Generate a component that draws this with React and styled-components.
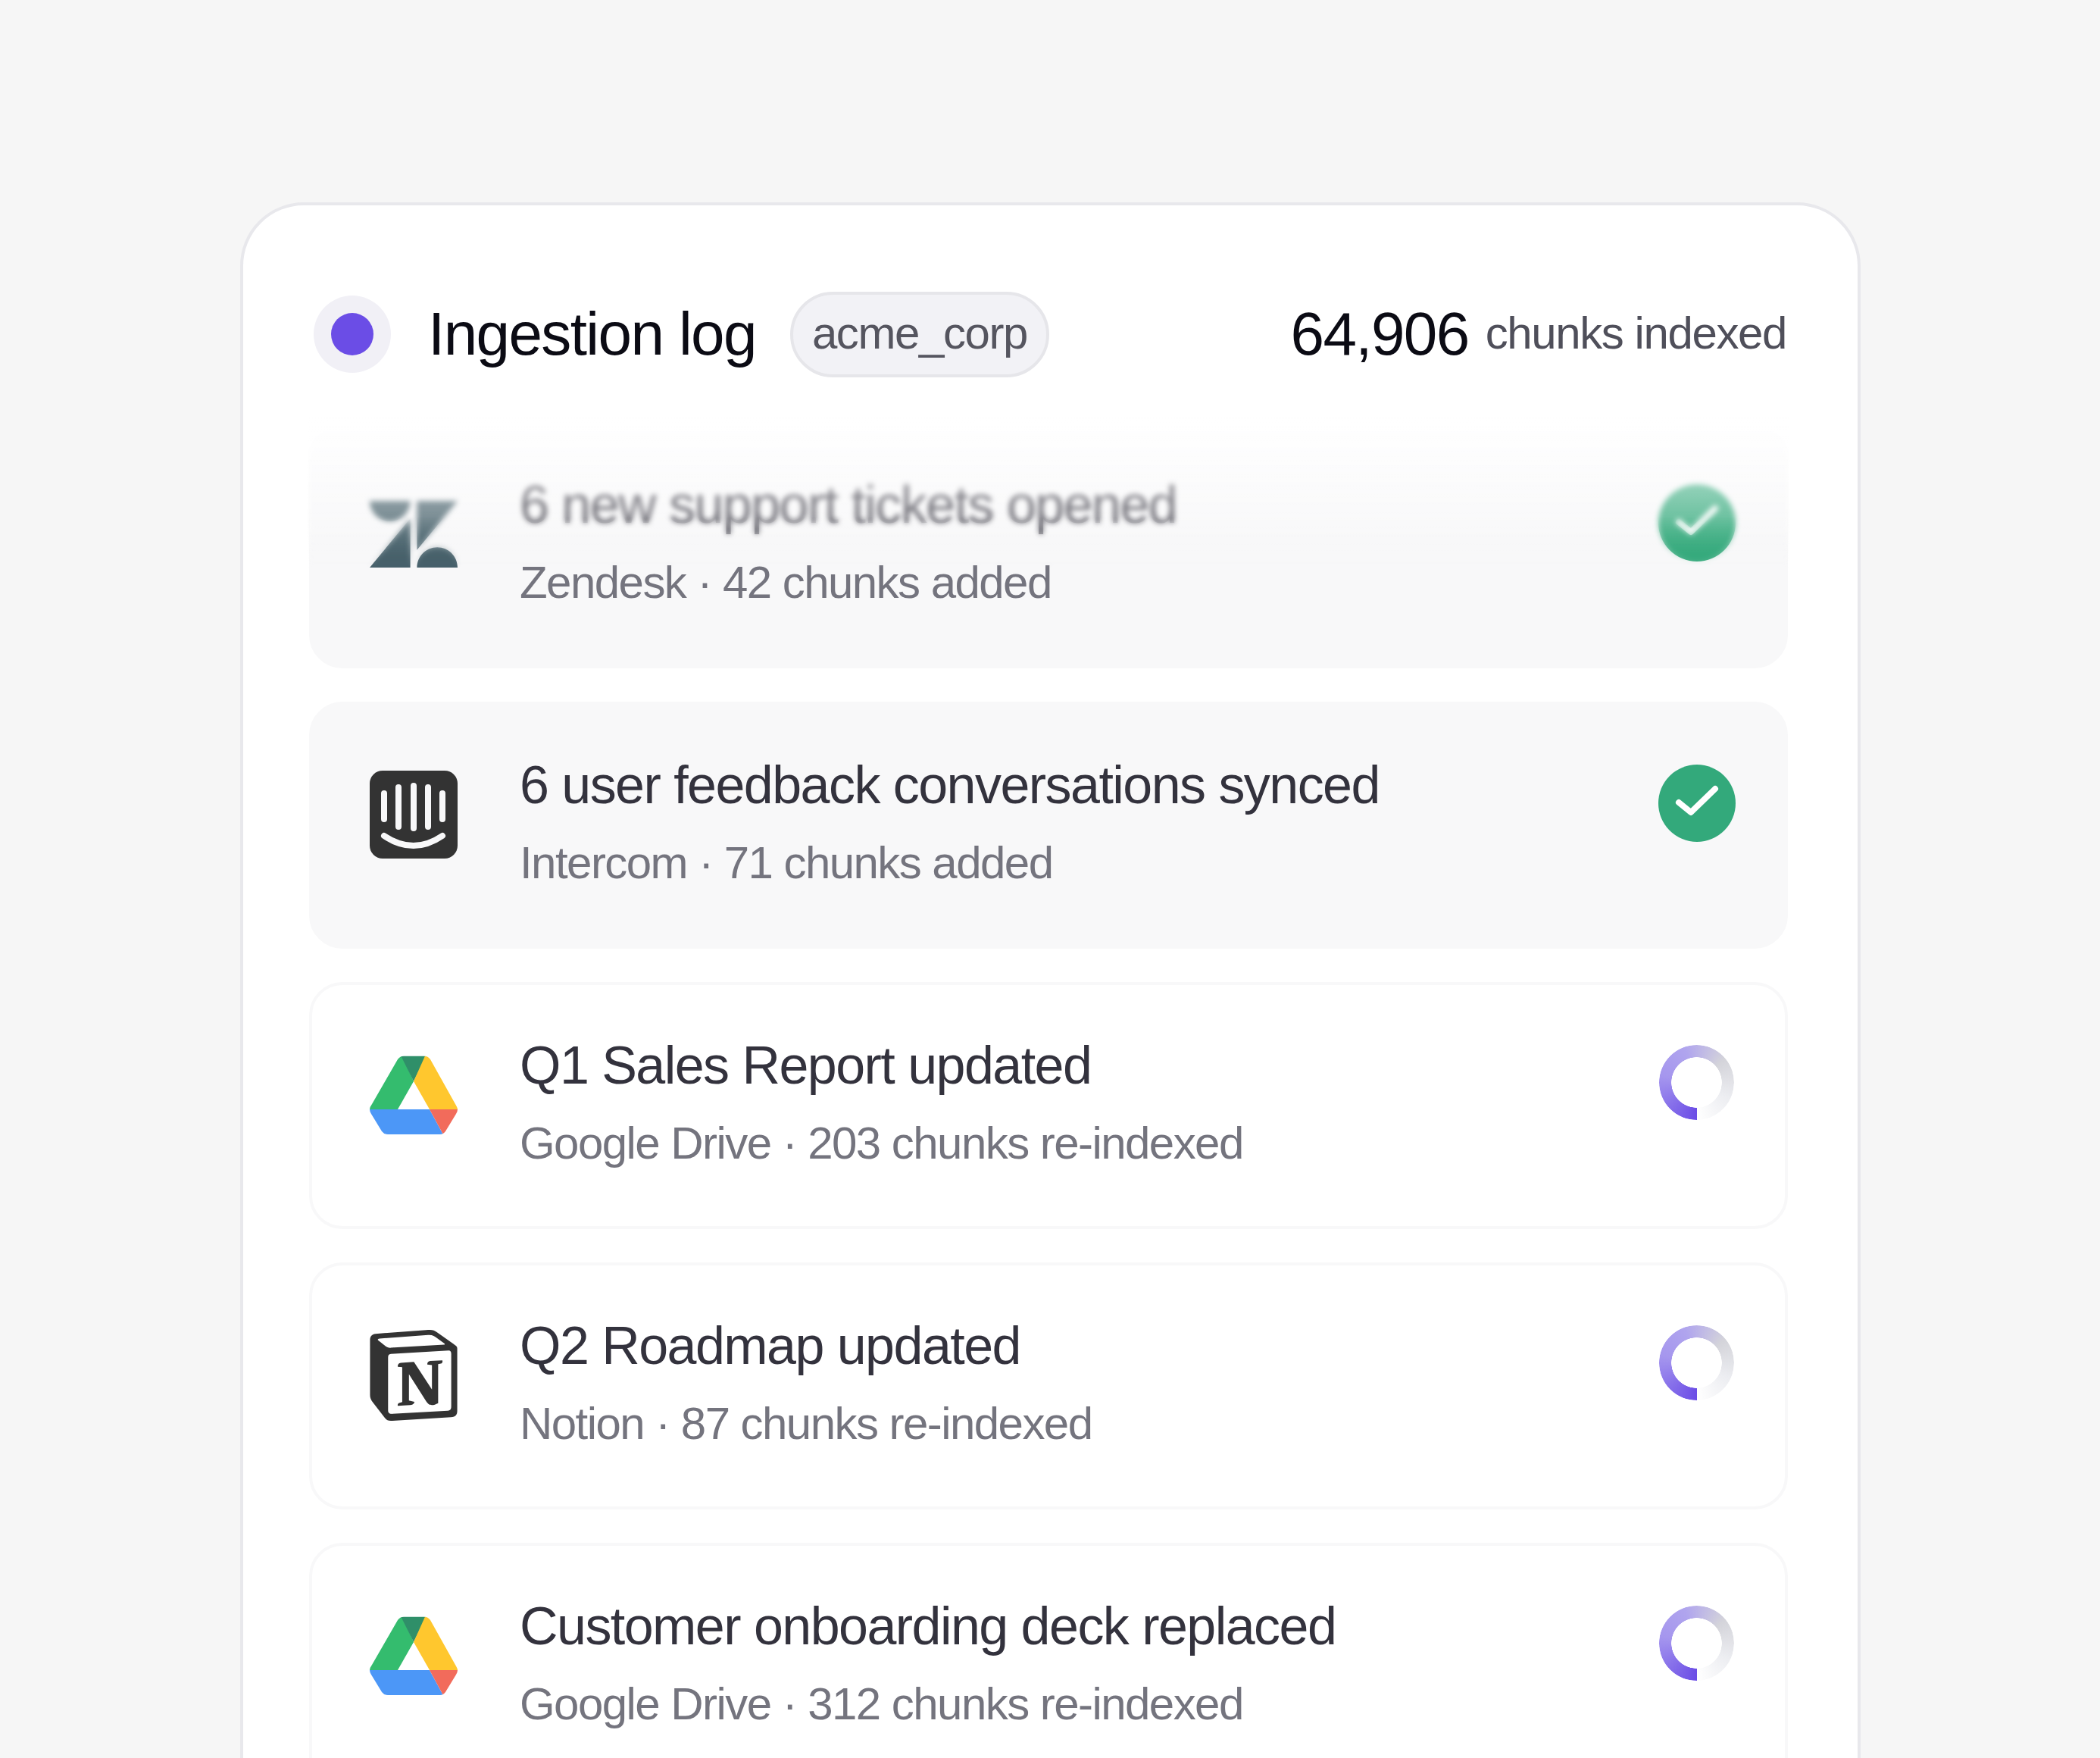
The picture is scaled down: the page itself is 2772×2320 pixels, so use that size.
import React from 'react'
import styled, { createGlobalStyle } from 'styled-components'
import { SiNotion, SiZendesk } from 'react-icons/si'

const items = [
  { logo: 'zendesk', title: '6 new support tickets opened', meta: 'Zendesk · 42 chunks added', done: true, faded: true },
  { logo: 'intercom', title: '6 user feedback conversations synced', meta: 'Intercom · 71 chunks added', done: true },
  { logo: 'drive', title: 'Q1 Sales Report updated', meta: 'Google Drive · 203 chunks re-indexed' },
  { logo: 'notion', title: 'Q2 Roadmap updated', meta: 'Notion · 87 chunks re-indexed' },
  { logo: 'drive', title: 'Customer onboarding deck replaced', meta: 'Google Drive · 312 chunks re-indexed' },
]

const IntercomLogo = () => (
  <svg width="116" height="116" viewBox="0 0 116 116">
    <rect width="116" height="116" rx="17" fill="#333" />
    <g stroke="#f8f8f9" strokeWidth="8" strokeLinecap="round" fill="none">
      <path d="M19 30V64M38 22V74M58 20V76M77 22V74M96 30V64" />
      <path d="M19 86Q58 112 96 86" />
    </g>
  </svg>
)

const DriveLogo = () => (
  <svg width="116" height="116" viewBox="0 0 116 116">
    <defs>
      <clipPath id="drive-outline">
        <path d="M45 6.7H72Q77 6.7 80 11L113 70Q116 75 116 77Q116 80 114 83L100 106Q97 110 93 110H24Q19 110 16 106L2 83Q0 80 0 77Q0 74 3 70L37 11Q40 6.7 45 6.7Z" />
      </clipPath>
    </defs>
    <g clipPath="url(#drive-outline)">
      <path d="M40 0H-4V77H37L58 40Z" fill="#34bc6e" />
      <path d="M38 0H78L58 40Z" fill="#2f8f69" />
      <path d="M76 0H120V77H79L58 40Z" fill="#ffc72e" />
      <path d="M-4 77H79L98 112H-4Z" fill="#4c97f7" />
      <path d="M79 77H120V112H98Z" fill="#f26b5b" />
    </g>
  </svg>
)

const Logo = ({ name }) => {
  if (name === 'zendesk') return <SiZendesk size={116} color="#46606a" />
  if (name === 'intercom') return <IntercomLogo />
  if (name === 'notion') return <NotionMark size={120} color="#333" />
  return <DriveLogo />
}

const App = () => (
  <Page>
    <GlobalStyle />
    <Card>
      <Header>
        <StatusRing>
          <StatusDot />
        </StatusRing>
        <HeaderTitle>Ingestion log</HeaderTitle>
        <Pill>acme_corp</Pill>
        <Stats>
          <Count>64,906</Count>
          <CountLabel>chunks indexed</CountLabel>
        </Stats>
      </Header>
      <List>
        {items.map(item => (
          <Row key={item.title} $filled={item.done}>
            <LogoSlot>
              <Logo name={item.logo} />
            </LogoSlot>
            <Text>
              <Title>{item.title}</Title>
              <Meta>{item.meta}</Meta>
            </Text>
            {item.done ? (
              <Check>
                <svg width="102" height="102" viewBox="0 0 102 102">
                  <path d="M27 50L43 63L75 32" fill="none" stroke="#fff" strokeWidth="8" strokeLinecap="round" strokeLinejoin="round" />
                </svg>
              </Check>
            ) : (
              <Spinner />
            )}
            {item.faded && <Fade />}
          </Row>
        ))}
      </List>
    </Card>
  </Page>
)

export default App

// Styles
const GlobalStyle = createGlobalStyle`
  html, body {
    margin: 0;
    height: 2320px;
    overflow: hidden;
    background: #f6f6f6;
    font-family: "Liberation Sans", Arial, sans-serif;
  }
`

const Page = styled.div`
  height: 2320px;
  box-sizing: border-box;
  padding: 267px 0 0 317px;
  overflow: hidden;
`

const Card = styled.div`
  width: 2139px;
  box-sizing: border-box;
  background: #fff;
  border: 4px solid #e8e8ec;
  border-radius: 84px;
  padding: 119px 92px 100px 87px;
`

const Header = styled.div`
  display: flex;
  align-items: center;
  height: 102px;
  margin-left: 6px;
`

const StatusRing = styled.div`
  width: 102px;
  height: 102px;
  border-radius: 50%;
  background: #f1f0f6;
  display: flex;
  align-items: center;
  justify-content: center;
  flex: none;
`

const StatusDot = styled.div`
  width: 56px;
  height: 56px;
  border-radius: 50%;
  background: #6b4de6;
`

const HeaderTitle = styled.div`
  margin-left: 49px;
  font-size: 80px;
  letter-spacing: -1.6px;
  color: #0b0b14;
`

const Pill = styled.div`
  margin-left: 45px;
  height: 113px;
  box-sizing: border-box;
  padding: 0 25px 3px;
  display: flex;
  align-items: center;
  border: 4px solid #e6e6ea;
  border-radius: 57px;
  background: #f2f2f6;
  font-size: 60px;
  letter-spacing: -1.4px;
  color: #55555f;
`

const Stats = styled.div`
  margin-left: auto;
  margin-right: 2px;
  display: flex;
  align-items: center;
  gap: 22px;
`

const Count = styled.div`
  font-size: 80px;
  letter-spacing: -1.6px;
  color: #0b0b14;
`

const CountLabel = styled.div`
  padding-bottom: 3px;
  font-size: 60px;
  letter-spacing: -1.4px;
  color: #4f4f5a;
`

const List = styled.div`
  margin-top: 64px;
  display: flex;
  flex-direction: column;
  gap: 44px;
`

const Row = styled.div`
  position: relative;
  display: flex;
  align-items: flex-start;
  height: 326px;
  box-sizing: border-box;
  padding: 64px 65px 0 76px;
  border: 4px solid #f8f8f9;
  border-radius: 44px;
  background: ${props => (props.$filled ? '#f8f8f9' : '#fff')};
`

const LogoSlot = styled.div`
  width: 116px;
  height: 116px;
  margin-top: 23px;
  flex: none;
  display: flex;
  align-items: center;
  justify-content: center;
`

const NotionMark = styled(SiNotion)`
  flex: none;
`

const Text = styled.div`
  flex: 1;
  margin-left: 82px;
`

const Title = styled.div`
  font-size: 70px;
  letter-spacing: -1.55px;
  line-height: 84px;
  color: #33323d;
`

const Meta = styled.div`
  margin-top: 23px;
  font-size: 60px;
  letter-spacing: -1.55px;
  line-height: 76px;
  color: #74747e;
`

const Check = styled.div`
  width: 102px;
  height: 102px;
  margin-top: 15px;
  border-radius: 50%;
  background: #33a97b;
`

const Spinner = styled.div`
  width: 99px;
  height: 99px;
  margin: 15px 2px 0 1px;
  border-radius: 50%;
  background: conic-gradient(
    from 180deg,
    #6b4de6 0%,
    #a596ee 28%,
    #b0a5ee 45%,
    #d4d4da 64%,
    #ecedf1 82%,
    #ffffff 100%
  );
  mask: radial-gradient(circle, transparent 33px, #000 33.5px);
`

const Fade = styled.div`
  position: absolute;
  left: -6px;
  right: -6px;
  top: -24px;
  height: 214px;
  backdrop-filter: blur(3.5px);
  mask-image: linear-gradient(#000 68%, transparent 100%);
  background: linear-gradient(
    rgba(255, 255, 255, 1) 5%,
    rgba(255, 255, 255, 0.45) 51%,
    rgba(255, 255, 255, 0) 100%
  );
`
